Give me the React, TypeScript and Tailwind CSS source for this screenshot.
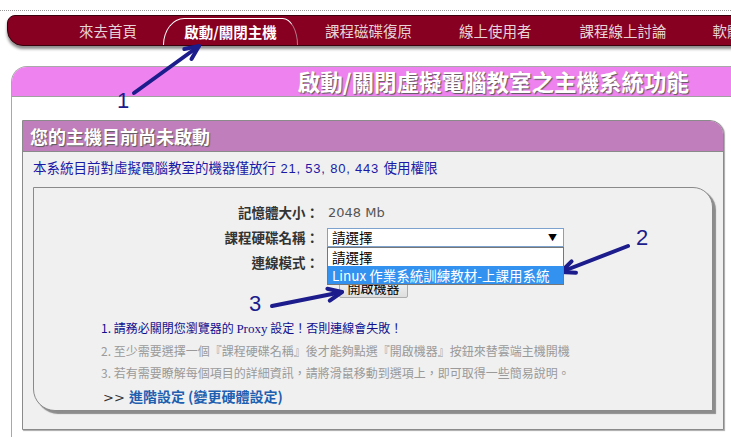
const navy = "#1c1c8c";

function Arrow({ x1, y1, x2, y2 }: { x1: number; y1: number; x2: number; y2: number }) {
  // arrow head computed from the direction of the shaft
  const a = Math.atan2(y2 - y1, x2 - x1);
  const len = 15;
  const spread = 0.42;
  const hx1 = x2 - len * Math.cos(a - spread);
  const hy1 = y2 - len * Math.sin(a - spread);
  const hx2 = x2 - len * Math.cos(a + spread);
  const hy2 = y2 - len * Math.sin(a + spread);
  return (
    <g stroke={navy} strokeWidth={4} strokeLinecap="round" strokeLinejoin="round" fill="none">
      <line x1={x1} y1={y1} x2={x2} y2={y2} />
      <polyline points={`${hx1},${hy1} ${x2},${y2} ${hx2},${hy2}`} />
    </g>
  );
}

function NavBar() {
  return (
    <div className="ml-[7px] mt-[4px] h-[31px] w-[740px] bg-[#870022] border border-[#3a000c] rounded-tl-[8px] rounded-bl-[16px] shadow-[0_3px_3px_rgba(0,0,0,0.45)] flex items-stretch text-[14.5px] leading-none text-[#e6d3d6] whitespace-nowrap">
      <span className="ml-[71px] shrink-0 self-center mt-[2px]">來去首頁</span>
      <div className="ml-[26px] shrink-0 mt-[2px] w-[135px] border-l border-t border-r border-l-white border-t-white border-r-[#b07a88] rounded-tl-[22px_28px] rounded-tr-[16px_28px] flex items-center justify-center text-white font-bold">
        啟動/關閉主機
      </div>
      <span className="ml-[27px] shrink-0 self-center mt-[2px]">課程磁碟復原</span>
      <span className="ml-[47px] shrink-0 self-center mt-[2px]">線上使用者</span>
      <span className="ml-[48px] shrink-0 self-center mt-[2px]">課程線上討論</span>
      <span className="ml-[46px] shrink-0 self-center mt-[2px]">軟體下載</span>
    </div>
  );
}

function FormRows() {
  return (
    <div className="pt-[12px]">
      <div className="flex items-center h-[25px]">
        <span className="w-[285px] text-right font-bold text-[13.5px] text-[#333]">記憶體大小：</span>
        <span className="ml-[9px] text-[13px] text-[#555] font-['DejaVu_Sans',sans-serif]">2048 Mb</span>
      </div>
      <div className="flex items-center h-[25px]">
        <span className="w-[285px] text-right font-bold text-[13.5px] text-[#333]">課程硬碟名稱：</span>
        <div className="relative ml-[8px]">
          <div className="w-[237px] h-[19px] bg-white border border-[#7da2ce] flex items-center justify-between pl-[4px] pr-[6px] text-[13.5px] leading-none text-black">
            <span>請選擇</span>
            <span className="text-[9px]">▼</span>
          </div>
          <div className="absolute left-0 top-full z-10 w-[237px] bg-white border border-[#777] text-[13.5px] leading-[18px]">
            <div className="pl-[4px] text-black">請選擇</div>
            <div className="pl-[4px] bg-[#3391f0] text-white whitespace-nowrap">Linux 作業系統訓練教材-上課用系統</div>
          </div>
        </div>
      </div>
      <div className="flex items-center h-[25px]">
        <span className="w-[285px] text-right font-bold text-[13.5px] text-[#333]">連線模式：</span>
      </div>
      <div className="mt-[2px] ml-[305px] flex">
        <button className="w-[69px] h-[21px] border border-[#adadad] rounded-[2px] bg-gradient-to-b from-[#f6f6f6] to-[#dedede] text-[13px] leading-none text-black">
          開啟機器
        </button>
      </div>
    </div>
  );
}

function Notes() {
  return (
    <div className="mt-[19px] pl-[67px] text-[12px] leading-[22px]">
      <div className="text-[#10108f]">
        1. 請務必關閉您瀏覽器的 <span className="font-['Liberation_Serif',serif] text-[13px]">Proxy</span> 設定！否則連線會失敗！
      </div>
      <div className="text-[#9a9a9a]">2. 至少需要選擇一個『課程硬碟名稱』後才能夠點選『開啟機器』按鈕來替雲端主機開機</div>
      <div className="text-[#9a9a9a]">3. 若有需要瞭解每個項目的詳細資訊，請將滑鼠移動到選項上，即可取得一些簡易說明。</div>
      <div className="mt-[2px] pl-[2px] leading-[20px] text-[14px]">
        <span className="text-[#333] font-['DejaVu_Sans',sans-serif] text-[13px]">&gt;&gt; </span>
        <span className="font-bold text-[#1f5fb0]">進階設定 (變更硬體設定)</span>
      </div>
    </div>
  );
}

export default function App() {
  return (
    <div className="relative w-[731px] h-[437px] overflow-hidden bg-white font-['Noto_Sans_CJK_TC',sans-serif]">
      <div className="pt-[10px]">
        <div className="border-t border-dotted border-[#9a9a9a]" />
      </div>
      <NavBar />

      {/* page panel */}
      <div className="ml-[11px] mt-[20px] h-[380px] border-l border-t border-[#a8a8a8] rounded-tl-[16px] overflow-hidden">
        <div className="h-[30px] bg-[#ee82ee] border-b border-[#a0a0a0] flex items-center justify-end pr-[42px]">
          <span className="text-[22.5px] leading-none font-bold text-white [text-shadow:1px_1px_1px_#5a5a5a]">
            啟動/關閉虛擬電腦教室之主機系統功能
          </span>
        </div>

        <div className="pt-[23px]">
          <div className="ml-[10px] w-[702px] h-[310px] bg-[#f0f0f0] border border-[#8a8a8a] rounded-tr-[14px] shadow-[1px_1px_1px_#aaa]">
            <div className="h-[31px] bg-[#c07fbc] border-b border-[#8a8a8a] rounded-tr-[13px] flex items-center pl-[7px]">
              <span className="text-[18px] leading-none font-bold text-white [text-shadow:1px_1px_1px_#5a5a5a]">您的主機目前尚未啟動</span>
            </div>
            <div className="mt-[7px] pl-[10px] leading-[16px] text-[13.5px] text-[#1a1aa6] whitespace-nowrap">
              <span>本系統目前對虛擬電腦教室的機器僅放行</span>
              <span className="font-['Liberation_Sans',sans-serif] text-[13px] tracking-[0.8px]"> 21, 53, 80, 443 </span>
              <span>使用權限</span>
            </div>
            <div className="ml-[10px] mt-[10px] w-[680px] h-[224px] bg-[#f0f0f0] border border-[#8a8a8a] rounded-tr-[20px] rounded-bl-[22px] shadow-[3px_3px_1px_#8c8c8c]">
              <FormRows />
              <Notes />
            </div>
          </div>
        </div>
      </div>

      {/* annotations drawn over the screenshot */}
      <svg className="absolute left-0 top-0 pointer-events-none" width={731} height={437}>
        <Arrow x1={134} y1={93} x2={199} y2={46} />
        <Arrow x1={628} y1={246} x2={561} y2={272} />
        <Arrow x1={272} y1={306} x2={342} y2={292} />
      </svg>
      <span className="absolute left-[117px] top-[90px] text-[22px] leading-none font-['Liberation_Sans',sans-serif] text-[#1c1c8c]">1</span>
      <span className="absolute left-[636px] top-[227px] text-[22px] leading-none font-['Liberation_Sans',sans-serif] text-[#1c1c8c]">2</span>
      <span className="absolute left-[249px] top-[293px] text-[22px] leading-none font-['Liberation_Sans',sans-serif] text-[#1c1c8c]">3</span>
    </div>
  );
}
